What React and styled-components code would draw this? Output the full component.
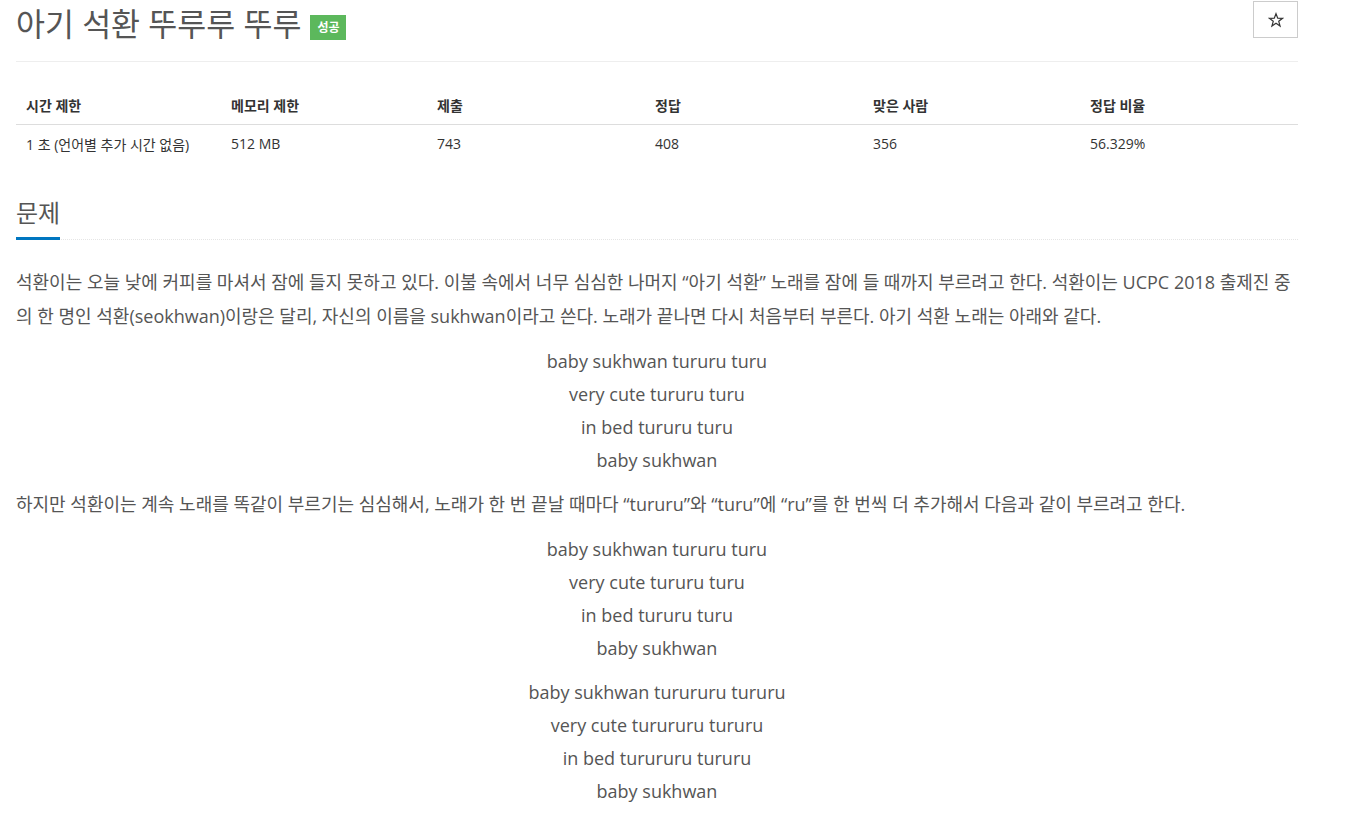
import React from "react";
import styled, { createGlobalStyle } from "styled-components";

const GlobalStyle = createGlobalStyle`
  body {
    margin: 0;
    background: #fff;
    font-family: "Open Sans", "Noto Sans CJK KR", sans-serif;
    color: #555;
  }
`;

const limits = [
  { label: "시간 제한", value: "1 초 (언어별 추가 시간 없음)" },
  { label: "메모리 제한", value: "512 MB" },
  { label: "제출", value: "743" },
  { label: "정답", value: "408" },
  { label: "맞은 사람", value: "356" },
  { label: "정답 비율", value: "56.329%" },
];

const colWidths = [205, 206, 218, 218, 217, 218];

const songs = [
  [
    "baby sukhwan tururu turu",
    "very cute tururu turu",
    "in bed tururu turu",
    "baby sukhwan",
  ],
  [
    "baby sukhwan tururu turu",
    "very cute tururu turu",
    "in bed tururu turu",
    "baby sukhwan",
  ],
  [
    "baby sukhwan turururu tururu",
    "very cute turururu tururu",
    "in bed turururu tururu",
    "baby sukhwan",
  ],
];

const StarIcon = () => (
  <svg width="16" height="16" viewBox="0 0 24 24">
    <polygon
      points="12,2.5 14.6,9.3 21.8,9.5 16.1,14 18.1,21 12,16.9 5.9,21 7.9,14 2.2,9.5 9.4,9.3"
      fill="none"
      stroke="#333"
      strokeWidth="1.8"
      strokeLinejoin="miter"
    />
  </svg>
);

const App = () => {
  return (
    <>
      <GlobalStyle />
      <Page>
        <Header>
          <Title>
            아기 석환 뚜루루 뚜루
            <Badge>성공</Badge>
          </Title>
          <StarButton type="button" aria-label="즐겨찾기">
            <StarIcon />
          </StarButton>
        </Header>

        <InfoTable>
          <colgroup>
            {colWidths.map((w, i) => (
              <col key={i} width={w} />
            ))}
          </colgroup>
          <thead>
            <tr>
              {limits.map((item) => (
                <Th key={item.label}>{item.label}</Th>
              ))}
            </tr>
          </thead>
          <tbody>
            <tr>
              {limits.map((item) => (
                <Td key={item.label}>{item.value}</Td>
              ))}
            </tr>
          </tbody>
        </InfoTable>

        <Section>
          <SectionHead>
            <SectionTitle>문제</SectionTitle>
          </SectionHead>
          <Paragraph>
            석환이는 오늘 낮에 커피를 마셔서 잠에 들지 못하고 있다. 이불 속에서
            너무 심심한 나머지 “아기 석환” 노래를 잠에 들 때까지 부르려고 한다.
            석환이는 UCPC 2018 출제진 중의 한 명인 석환(seokhwan)이랑은 달리,
            자신의 이름을 sukhwan이라고 쓴다. 노래가 끝나면 다시 처음부터
            부른다. 아기 석환 노래는 아래와 같다.
          </Paragraph>
          <Lyrics>
            {songs[0].map((line, i) => (
              <LyricLine key={i}>{line}</LyricLine>
            ))}
          </Lyrics>
          <Paragraph>
            하지만 석환이는 계속 노래를 똑같이 부르기는 심심해서, 노래가 한 번
            끝날 때마다 “tururu”와 “turu”에 “ru”를 한 번씩 더 추가해서 다음과
            같이 부르려고 한다.
          </Paragraph>
          {songs.slice(1).map((song, s) => (
            <Lyrics key={s}>
              {song.map((line, i) => (
                <LyricLine key={i}>{line}</LyricLine>
              ))}
            </Lyrics>
          ))}
        </Section>
      </Page>
    </>
  );
};

const Page = styled.div`
  width: 1282px;
  margin-left: 16px;
`;

const Header = styled.div`
  display: flex;
  justify-content: space-between;
  align-items: flex-start;
  height: 61px;
  border-bottom: 1px solid #eee;
`;

const Title = styled.h1`
  margin: 0;
  padding-top: 4px;
  font-size: 31.5px;
  font-weight: 400;
  line-height: 40px;
  color: #555;
  display: flex;
  align-items: center;
`;

const Badge = styled.span`
  display: inline-block;
  margin-left: 9px;
  margin-top: 6px;
  padding: 0 7px;
  height: 25px;
  line-height: 25px;
  background: #5cb85c;
  color: #fff;
  font-size: 12px;
  font-weight: 700;
`;

const StarButton = styled.button`
  display: flex;
  align-items: center;
  justify-content: center;
  width: 45px;
  height: 37px;
  margin-top: 1px;
  border: 1px solid #ccc;
  background: #fff;
  padding: 0;
  cursor: pointer;
`;

const InfoTable = styled.table`
  width: 100%;
  margin-top: 24px;
  border-collapse: collapse;
  table-layout: fixed;
  font-size: 14px;
  color: #333;
`;

const Th = styled.th`
  text-align: left;
  font-weight: 700;
  padding: 8px 10px;
  height: 38px;
  box-sizing: border-box;
  border-bottom: 1px solid #ddd;
`;

const Td = styled.td`
  padding: 8px 10px;
  height: 39px;
  box-sizing: border-box;
`;

const Section = styled.section`
  margin-top: 32px;
`;

const SectionHead = styled.div`
  border-bottom: 1px dotted #e5e5e5;
  margin-bottom: 25px;
`;

const SectionTitle = styled.h2`
  display: inline-block;
  margin: 0 0 -1px;
  padding-bottom: 7px;
  font-size: 24px;
  font-weight: 400;
  line-height: 35px;
  color: #555;
  border-bottom: 3px solid #0076c0;
`;

const Paragraph = styled.p`
  margin: 0 0 12px;
  font-size: 18px;
  line-height: 34px;
`;

const Lyrics = styled.p`
  margin: 0 0 10px;
  text-align: center;
  font-size: 18px;
  line-height: 33px;

  & + & {
    margin-top: 11px;
  }
`;

const LyricLine = styled.span`
  display: block;
`;

export default App;
